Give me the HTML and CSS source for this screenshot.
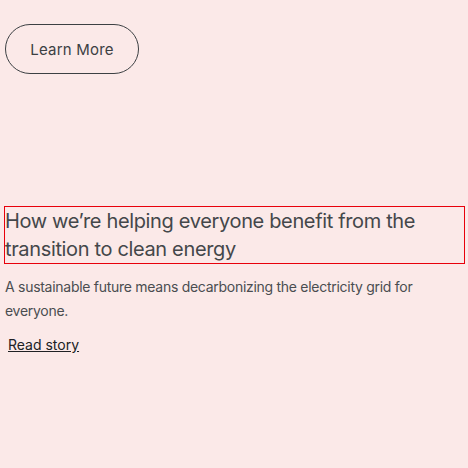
FILE: index.html
```html
<!DOCTYPE html>
<html lang="en">
<head>
<meta charset="utf-8">
<link rel="stylesheet" href="styles.css">
</head>
<body>
<main class="page">
  <a class="btn" href="#">Learn More</a>
  <section class="story">
    <h2 class="story-title">How we’re helping everyone benefit from the transition to clean energy</h2>
    <p class="story-text">A sustainable future means decarbonizing the electricity grid for everyone.</p>
    <a class="story-link" href="#">Read story</a>
  </section>
</main>
</body>
</html>
```
FILE: styles.css
```css
html, body {
  margin: 0;
  padding: 0;
  background: #fbe9e8;
}
body {
  font-family: Inter, "Liberation Sans", sans-serif;
  color: #3c4043;
  width: 468px;
  height: 468px;
  overflow: hidden;
}
.page {
  display: flex;
  flex-direction: column;
  align-items: flex-start;
  padding: 24px 0 0 5px;
}
.btn {
  display: flex;
  align-items: center;
  justify-content: center;
  width: 132px;
  height: 48px;
  border: 1px solid #3c4043;
  border-radius: 25px;
  font-size: 15px;
  letter-spacing: 0.2px;
  color: #3c4043;
  text-decoration: none;
}
.story {
  margin-top: 133px;
  display: flex;
  flex-direction: column;
  align-items: flex-start;
}
.story-title {
  margin: 0;
  width: 459px;
  font-size: 20px;
  font-weight: 400;
  line-height: 28px;
  letter-spacing: -0.35px;
  outline: 1px solid #e8000b;
  color: #44474a;
}
.story-text {
  margin: 12px 0 0;
  font-size: 14px;
  line-height: 24px;
  letter-spacing: -0.28px;
  color: #4a4d50;
  width: 440px;
}
.story-link {
  margin: 10px 0 0 3px;
  font-size: 14px;
  line-height: 24px;
  color: #202124;
  text-decoration: underline;
}
```
